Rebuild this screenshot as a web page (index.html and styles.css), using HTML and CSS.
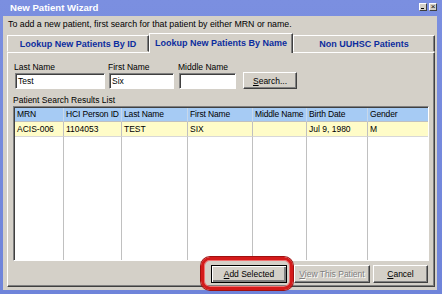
FILE: index.html
```html
<!DOCTYPE html>
<html>
<head>
<meta charset="utf-8">
<link rel="stylesheet" href="styles.css">
</head>
<body>
<div class="window">
  <div class="titlebar">
    <span class="title">New Patient Wizard</span>
    <div class="controls">
      <span class="ctl min"></span>
      <span class="ctl close">×</span>
    </div>
  </div>
  <div class="client">
    <p class="intro">To add a new patient, first search for that patient by either MRN or name.</p>
    <div class="tabs">
      <div class="tab">Lookup New Patients By ID</div>
      <div class="tab active">Lookup New Patients By Name</div>
      <div class="tab">Non UUHSC Patients</div>
    </div>
    <div class="panel">
      <div class="form">
        <div class="field f-last">
          <span class="label">Last Name</span>
          <span class="input">Test</span>
        </div>
        <div class="field f-first">
          <span class="label">First Name</span>
          <span class="input">Six</span>
        </div>
        <div class="field f-middle">
          <span class="label">Middle Name</span>
          <span class="input"></span>
        </div>
        <button class="btn search"><u>S</u>earch...</button>
      </div>
      <div class="list-label">Patient Search Results List</div>
      <div class="grid">
        <div class="hd">MRN</div>
        <div class="hd">HCI Person ID</div>
        <div class="hd">Last Name</div>
        <div class="hd">First Name</div>
        <div class="hd">Middle Name</div>
        <div class="hd">Birth Date</div>
        <div class="hd">Gender</div>
        <div class="cell sel">ACIS-006</div>
        <div class="cell sel">1104053</div>
        <div class="cell sel">TEST</div>
        <div class="cell sel">SIX</div>
        <div class="cell sel"></div>
        <div class="cell sel">Jul 9, 1980</div>
        <div class="cell sel">M</div>
        <div class="fill"></div>
        <div class="fill"></div>
        <div class="fill"></div>
        <div class="fill"></div>
        <div class="fill"></div>
        <div class="fill"></div>
        <div class="fill"></div>
      </div>
      <div class="actions">
        <div class="hl-wrap">
          <button class="btn default"><u>A</u>dd Selected</button>
          <span class="highlight"></span>
        </div>
        <button class="btn disabled"><u>V</u>iew This Patient</button>
        <button class="btn cancel"><u>C</u>ancel</button>
      </div>
    </div>
  </div>
</div>
</body>
</html>
```

FILE: styles.css
```css
* { box-sizing: border-box; }
html, body { margin: 0; padding: 0; }
body {
  width: 442px;
  height: 294px;
  overflow: hidden;
  font-family: "Liberation Sans", Arial, sans-serif;
  font-size: 8.5px;
  color: #000;
}
.window {
  width: 442px;
  height: 294px;
  background: linear-gradient(#7b8fe0, #6f84da);
  display: flex;
  flex-direction: column;
}
.titlebar {
  height: 16px;
  display: flex;
  align-items: center;
  justify-content: space-between;
  padding: 0 5px 2px 10px;
}
.title {
  color: #fff;
  font-weight: bold;
  font-size: 9.6px;
}
.controls { display: flex; gap: 2px; }
.ctl {
  width: 8px;
  height: 8px;
  background: #d4d0c8;
  border: 1px solid;
  border-color: #fff #404040 #404040 #fff;
  font-size: 8px;
  line-height: 6px;
  text-align: center;
  position: relative;
}
.ctl.min::after {
  content: "";
  position: absolute;
  left: 1px;
  bottom: 1px;
  width: 3px;
  height: 1px;
  background: #000;
}
.client {
  flex: 1;
  margin: 0 5px 4px 3px;
  background: #d4d0c8;
  padding: 0 2px 0 4px;
  display: flex;
  flex-direction: column;
}
.intro {
  margin: 1px 0 0 1px;
  height: 14px;
  line-height: 14px;
  font-size: 8.8px;
}
.tabs {
  margin-top: 2px;
  height: 19px;
  display: flex;
  align-items: flex-end;
  position: relative;
  z-index: 1;
}
.tab {
  width: 142px;
  height: 17px;
  border: 1px solid;
  border-color: #fff #404040 transparent #fff;
  box-shadow: inset -1px 0 0 #808080;
  color: #0c2d9e;
  font-weight: bold;
  font-size: 9px;
  display: flex;
  align-items: center;
  justify-content: center;
  background: #d4d0c8;
}
.tab.active {
  width: 144px;
  height: 20px;
  margin-bottom: -1px;
  border-bottom: none;
  padding-bottom: 1px;
}
.panel {
  flex: 1;
  margin-bottom: 3px;
  border-top: 1px solid #fff;
  border-left: 1px solid #fff;
  border-right: 1px solid #404040;
  border-bottom: 1px solid #404040;
  box-shadow: inset -1px -1px 0 #808080;
  padding: 8px 6px 3px 5px;
  display: flex;
  flex-direction: column;
}
.form {
  display: flex;
  align-items: flex-end;
  height: 28px;
  padding-left: 2px;
}
.field { display: flex; flex-direction: column; }
.label { height: 12px; line-height: 12px; margin-left: -1px; }
.input {
  height: 16px;
  background: #fff;
  border: 1px solid;
  border-color: #808080 #fff #fff #808080;
  box-shadow: inset 1px 1px 0 #404040;
  padding: 0 0 0 2px;
  line-height: 14px;
}
.f-last .input { width: 90px; }
.f-first { margin-left: 4px; }
.f-first .input { width: 65px; }
.f-middle { margin-left: 5px; }
.f-middle .input { width: 57px; }
.btn {
  font-family: inherit;
  font-size: 8.5px;
  background: #d4d0c8;
  border: 1px solid;
  border-color: #fff #404040 #404040 #fff;
  box-shadow: inset -1px -1px 0 #808080;
  padding: 0;
  color: #000;
  height: 18px;
}
.btn.search {
  width: 54px;
  height: 17px;
  margin-left: 7px;
  margin-bottom: 0;
}
.list-label {
  margin-top: 5px;
  height: 12px;
  line-height: 12px;
  padding-left: 0;
}
.grid {
  height: 155px;
  margin-right: -1px;
  display: grid;
  grid-template-columns: 49px 58px 66px 65px 54px 61px 1fr;
  grid-template-rows: 14px 15px 1fr;
  background: #fff;
  border: 1px solid;
  border-color: #808080 #fff #fff #808080;
  box-shadow: inset 1px 1px 0 #404040;
  padding: 1px 0 0 1px;
}
.hd {
  background: #a6cbf4;
  border-right: 1px solid #c8d8ea;
  border-bottom: 1px solid #c0c0c0;
  padding-left: 2px;
  line-height: 13px;
  white-space: nowrap;
  overflow: hidden;
  letter-spacing: -0.15px;
}
.cell {
  border-right: 1px solid #c0c0c0;
  border-bottom: 1px solid #d8d8d8;
  padding-left: 2px;
  line-height: 14px;
  white-space: nowrap;
}
.cell.sel { background: #fffcc8; }
.fill { border-right: 1px solid #c0c0c0; }
.hd:nth-child(7), .cell:nth-child(14), .fill:nth-child(21) { border-right: none; }
.actions {
  margin-top: 4px;
  display: flex;
  justify-content: flex-end;
  align-items: center;
}
.hl-wrap { position: relative; }
.btn.default {
  width: 76px;
  border-color: #000;
  box-shadow: inset 1px 1px 0 #fff, inset -2px -2px 0 #808080;
  display: block;
}
.highlight {
  position: absolute;
  left: -10px;
  top: -8px;
  right: -6px;
  bottom: -7px;
  border: 3px solid #d41a1a;
  border-radius: 9px;
  box-shadow: 0 0 0 1px #a01010, inset 0 0 0 1px #f07070;
  pointer-events: none;
}
.btn.disabled {
  width: 76px;
  margin-left: 7px;
  color: #808080;
  text-shadow: 1px 1px 0 #fff;
}
.btn.cancel {
  width: 55px;
  margin-left: 3px;
}
```
